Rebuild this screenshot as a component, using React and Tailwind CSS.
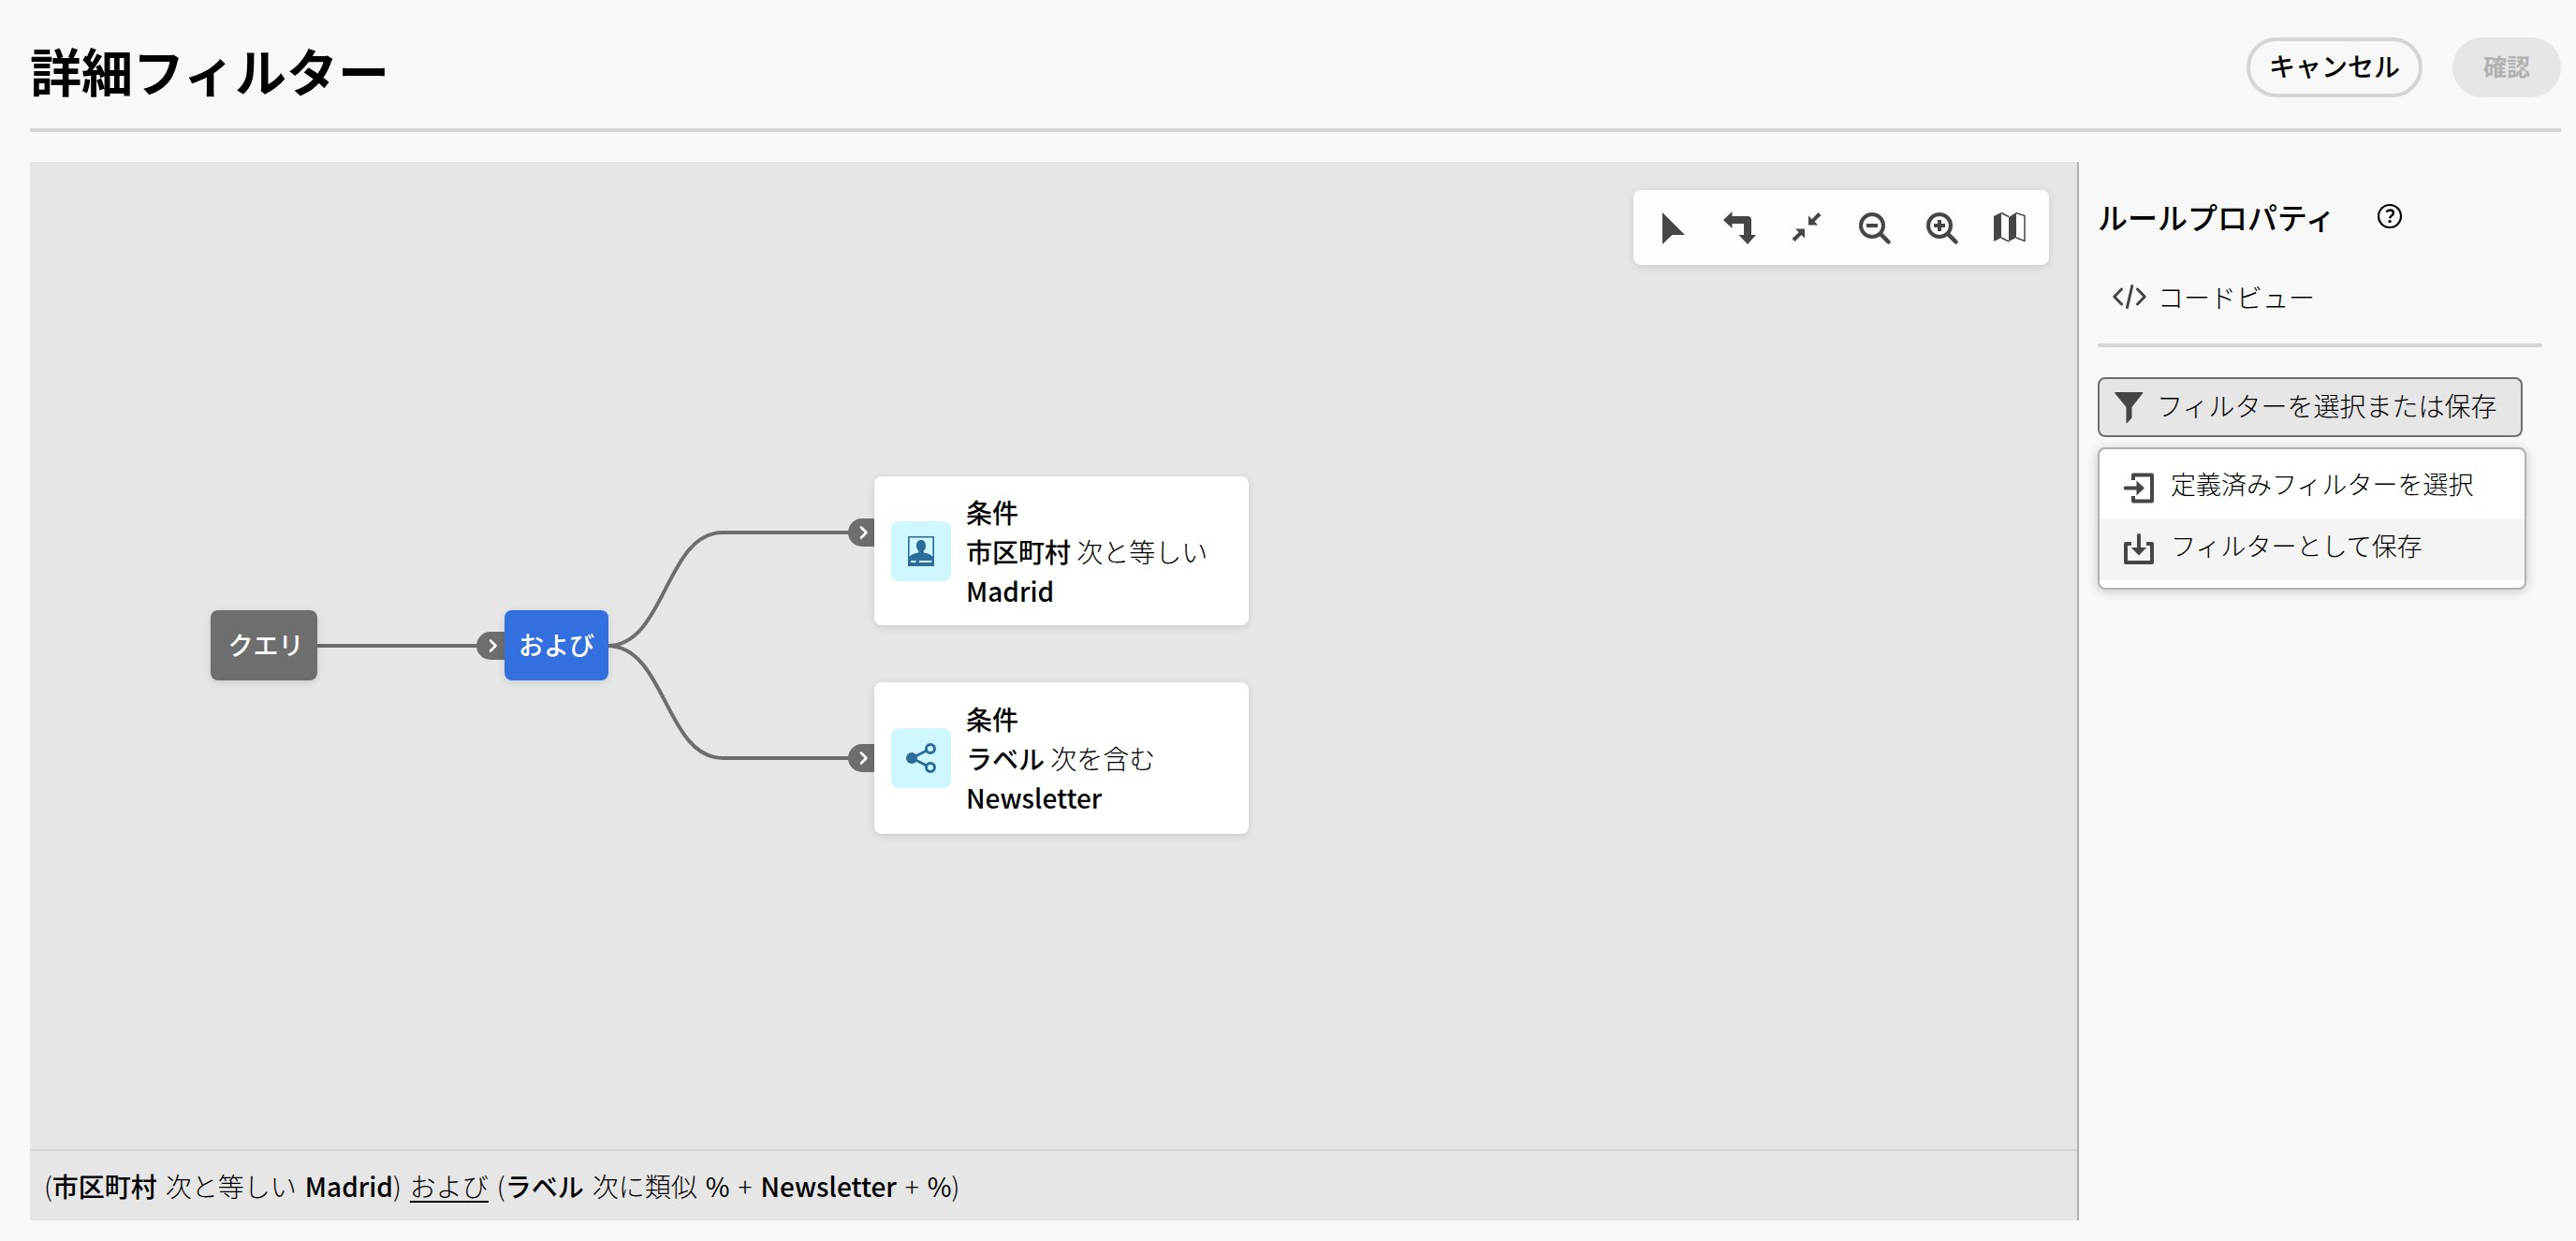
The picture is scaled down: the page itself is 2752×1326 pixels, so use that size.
import React from "react";

const iconClass = "w-9 h-9 shrink-0 text-[#464646]";

const CursorIcon = () => (
  <svg viewBox="0 0 36 36" className={iconClass} fill="currentColor" aria-hidden="true">
    <path d="M7 1v34l10.500-10H31z" />
  </svg>
);

const TurnIcon = () => (
  <svg viewBox="0 0 36 36" className={iconClass} fill="currentColor" aria-hidden="true">
    <path d="M0 9L9.500 0v5H26a4 4 0 0 1 4 4v16h5L26 35 16.500 25H22V13H9.500v5z" />
  </svg>
);

const CollapseIcon = () => (
  <svg viewBox="0 0 36 36" className={iconClass} fill="currentColor" aria-hidden="true">
    <path d="M19 4.500v10h10l-3.500-3.700L32.500 4 29.500 1l-6.800 7.200z" />
    <path d="M15 18.500H5l3.700 3.700L1.500 29l3 3 7-7 3.500 3.500z" />
  </svg>
);

const ZoomIcon = ({ plus }) => (
  <svg viewBox="0 0 36 36" className={iconClass} fill="none" stroke="currentColor" aria-hidden="true">
    <circle cx="15" cy="15" r="12" strokeWidth="4" />
    <path d="M24 24l8.500 8.500" strokeWidth="4.500" strokeLinecap="round" />
    <path d={plus ? "M9 15h12M15 9v12" : "M9 15h12"} strokeWidth="4" />
  </svg>
);

const MapIcon = () => (
  <svg viewBox="0 0 36 36" className={iconClass} fill="currentColor" aria-hidden="true">
    <path d="M1 5l8-4v27l-8 4zM17 6l8-5v27l-8 4z" />
    <path d="M9 1.500l8 4M9 28l8 4M25 1.500l9 3v27l-9-3.500" fill="none" stroke="currentColor" strokeWidth="1.500" />
  </svg>
);

const HelpIcon = () => (
  <svg viewBox="0 0 28 28" className="size-7" fill="none" stroke="currentColor" aria-hidden="true">
    <circle cx="14" cy="14" r="12" strokeWidth="2.200" />
    <path d="M10.500 9.500c1-1.600 2.300-2 3.700-2 2.200 0 3.700 1.200 3.700 3 0 3-3.700 2.800-3.700 5.700" strokeWidth="2.400" />
    <circle cx="14.100" cy="19.600" r="1.700" fill="currentColor" stroke="none" />
  </svg>
);

const CodeIcon = () => (
  <svg viewBox="0 0 36 36" className={iconClass} fill="none" stroke="currentColor" strokeWidth="3" strokeLinecap="round" strokeLinejoin="round" aria-hidden="true">
    <path d="M9.500 10L1.800 18l7.700 8M26.500 10l7.700 8-7.700 8M20.800 6.500L15.500 29.500" />
  </svg>
);

const FunnelIcon = () => (
  <svg viewBox="0 0 36 36" className={iconClass} fill="currentColor" aria-hidden="true">
    <path d="M4 2h28.500c.9 0 1 .8.600 1.300L21.500 18v11.500L16.500 35h-1V18L3.400 3.300C3 2.700 3.200 2 4 2z" />
  </svg>
);

const EnterIcon = () => (
  <svg viewBox="0 0 36 36" className={iconClass} aria-hidden="true">
    <path d="M12 10V4.500h20v28H12V27" fill="none" stroke="currentColor" strokeWidth="4" strokeLinejoin="round" />
    <path d="M3.500 16.600H15.500V10.500L24 18.500l-8.500 8v-6.100H3.500a1.900 1.900 0 0 1 0-3.800z" fill="currentColor" />
  </svg>
);

const SaveIcon = () => (
  <svg viewBox="0 0 36 36" className={iconClass} aria-hidden="true">
    <path d="M10 12H4v20h28V12h-6" fill="none" stroke="currentColor" strokeWidth="4" strokeLinejoin="round" />
    <path d="M16 3a2 2 0 0 1 4 0v13h6.200L18 24.500 9.800 16H16z" fill="currentColor" />
  </svg>
);

const PersonCardIcon = () => (
  <svg viewBox="0 0 32 32" className="size-8" aria-hidden="true">
    <path d="M2.800 .8h26.400v30.400H2.800z" fill="none" stroke="currentColor" strokeWidth="1.600" />
    <path d="M16 4c3.300 0 5 2.600 5 6 0 2.500-.9 4.600-2.300 5.800v1.800c3.500.6 7.500 1.700 9.300 3.900h1.500V32h-27V21.500H4c1.800-2.200 5.800-3.300 9.300-3.900v-1.800C11.900 14.600 11 12.500 11 10c0-3.400 1.700-6 5-6z" fill="currentColor" />
    <path d="M5 27h5.500M14 27h13.500" stroke="#cef7ff" strokeWidth="2" />
  </svg>
);

const ShareIcon = () => (
  <svg viewBox="0 0 32 32" className="size-8" fill="none" stroke="currentColor" strokeWidth="3" aria-hidden="true">
    <path d="M6 16L26 6M6 16l20 10" />
    <circle cx="6" cy="16" r="6" fill="currentColor" stroke="none" />
    <circle cx="26" cy="6" r="4.500" fill="#cef7ff" />
    <circle cx="26" cy="26" r="4.500" fill="#cef7ff" />
  </svg>
);

const Port = ({ className }) => (
  <span className={`absolute flex h-[30px] items-center justify-center rounded-l-full bg-[#6e6e6e] pl-1 text-white ${className}`}>
    <svg viewBox="0 0 16 16" className="size-4" fill="none" stroke="currentColor" strokeWidth="2.600" strokeLinecap="round" strokeLinejoin="round" aria-hidden="true">
      <path d="M6 2.500L11.500 8 6 13.500" />
    </svg>
  </span>
);

const ConditionCard = ({ className, icon, field, operator, value }) => (
  <article className={`absolute flex w-[400px] items-center gap-4 rounded-lg bg-white px-[18px] shadow-[0_2px_8px_rgba(0,0,0,0.12)] ${className}`}>
    <span className="flex size-16 shrink-0 items-center justify-center rounded-lg bg-[#cef7ff] text-[#2c6c9c]">{icon}</span>
    <div className="leading-[42px]">
      <p className="font-medium">条件</p>
      <p><b className="font-medium">{field}</b> {operator}</p>
      <p className="font-medium">{value}</p>
    </div>
  </article>
);

const tools = [
  { label: "選択", icon: <CursorIcon /> },
  { label: "方向を変更", icon: <TurnIcon /> },
  { label: "画面に合わせる", icon: <CollapseIcon /> },
  { label: "縮小", icon: <ZoomIcon /> },
  { label: "拡大", icon: <ZoomIcon plus /> },
  { label: "マップ", icon: <MapIcon /> },
];

export default function App() {
  return (
    <div lang="ja" className="flex min-h-screen flex-col bg-[#f8f8f8] pr-4 pb-[22px] pl-8 font-['Noto_Sans_CJK_JP',sans-serif] text-[28px] font-light text-black">
      <header className="flex h-[141px] items-start justify-between border-b-4 border-[#d5d5d5] pt-10">
        <h1 className="text-[55px] leading-[68px] font-bold">詳細フィルター</h1>
        <div className="flex gap-8">
          <button type="button" className="h-16 rounded-full border-4 border-[#d5d5d5] px-5 pb-1 leading-none font-medium">キャンセル</button>
          <button type="button" disabled className="h-16 rounded-full bg-[#e6e6e6] px-[33px] pb-1 text-[25px] leading-none font-bold text-[#b1b1b1]">確認</button>
        </div>
      </header>

      <main className="mt-8 flex flex-1">
        <section aria-label="ルールキャンバス" className="flex flex-1 flex-col border-r-2 border-[#b1b1b1] bg-[#e6e6e6]">
          <div className="relative flex-1">
            <div role="toolbar" className="absolute top-[30px] right-[30px] flex h-20 items-center rounded-lg bg-[#fdfdfd] px-1.5 pt-px shadow-[0_2px_8px_rgba(0,0,0,0.12)]">
              {tools.map((tool) => (
                <button key={tool.label} type="button" aria-label={tool.label} className="flex h-18 w-18 items-center justify-center">{tool.icon}</button>
              ))}
            </div>

            <svg viewBox="0 0 900 720" className="absolute top-0 left-0 h-[720px] w-[900px]" fill="none" stroke="#6e6e6e" strokeWidth="4" aria-hidden="true">
              <path d="M307 517H480" />
              <path d="M617 517C679 517 679 396 740 396H880" />
              <path d="M617 517C679 517 679 637 740 637H880" />
            </svg>

            <div className="absolute top-[479px] left-[193px] flex h-[75px] w-[114px] items-center justify-center rounded-lg bg-[#6e6e6e] pl-1 text-[27px] font-medium text-white shadow-[0_2px_8px_rgba(0,0,0,0.12)]">クエリ</div>
            <Port className="top-[502px] left-[477px] w-[30px]" />
            <div className="absolute top-[479px] left-[507px] flex h-[75px] w-[111px] items-center justify-center rounded-lg bg-[#346fe0] text-[27px] font-medium text-white shadow-[0_2px_8px_rgba(0,0,0,0.12)]">および</div>
            <Port className="top-[381px] left-[874px] w-7" />
            <ConditionCard className="top-[336px] left-[902px] h-[159px]" icon={<PersonCardIcon />} field="市区町村" operator="次と等しい" value="Madrid" />
            <Port className="top-[622px] left-[874px] w-7" />
            <ConditionCard className="top-[556px] left-[902px] h-[162px]" icon={<ShareIcon />} field="ラベル" operator="次を含む" value="Newsletter" />
          </div>

          <footer className="flex h-[76px] items-center border-t-2 border-[#d5d5d5] px-[15px]">
            <p className="flex flex-wrap gap-x-[9px]">
              <span>(<b className="font-medium">市区町村</b></span>
              <span>次と等しい</span>
              <span><b className="font-medium">Madrid</b>)</span>
              <a href="#and" className="underline decoration-2 underline-offset-4">および</a>
              <span>(<b className="font-medium">ラベル</b></span>
              <span>次に類似</span>
              <span className="font-normal">%</span>
              <span>+</span>
              <b className="font-medium">Newsletter</b>
              <span>+</span>
              <span><span className="font-normal">%</span>)</span>
            </p>
          </footer>
        </section>

        <aside className="w-[515px] px-5 pt-[34px]">
          <div className="flex items-center gap-11">
            <h2 className="text-[32px] leading-[48px] font-medium">ルールプロパティ</h2>
            <button type="button" aria-label="ヘルプ"><HelpIcon /></button>
          </div>
          <button type="button" className="mt-[30px] ml-4 flex h-16 items-center gap-3"><CodeIcon />コードビュー</button>
          <hr className="mt-[18px] rounded-full border-2 border-[#d5d5d5]" />
          <div className="relative mt-8 w-fit">
            <button type="button" aria-expanded="true" className="flex h-16 items-center gap-3 rounded-lg border-2 border-[#6e6e6e] bg-[#e6e6e6] pr-[26px] pl-[13px]"><FunnelIcon /><span className="pb-1">フィルターを選択または保存</span></button>
            <div role="menu" className="absolute top-[75px] left-0 w-[458px] rounded-lg border-2 border-[#b1b1b1] bg-white pt-2 pb-2 text-[27px] shadow-[0_2px_12px_rgba(0,0,0,0.2)]">
              <button type="button" role="menuitem" className="flex h-[66px] w-full items-center gap-4 pl-6"><EnterIcon /><span className="pb-2">定義済みフィルターを選択</span></button>
              <button type="button" role="menuitem" className="flex h-[66px] w-full items-center gap-4 bg-[#f4f4f4] pl-6"><SaveIcon /><span className="pb-2">フィルターとして保存</span></button>
            </div>
          </div>
        </aside>
      </main>
    </div>
  );
}
